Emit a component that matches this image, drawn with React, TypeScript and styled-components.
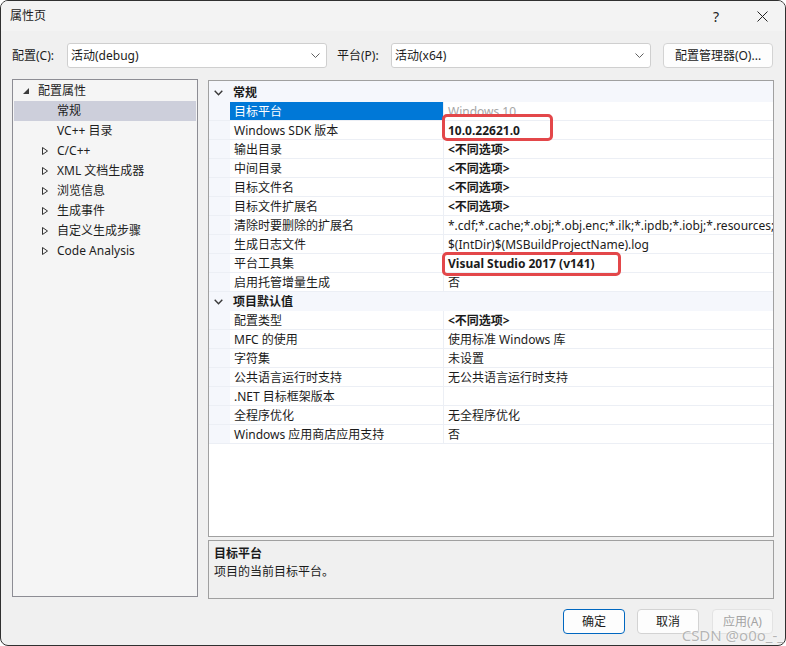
import React from 'react';
import styled, { createGlobalStyle, css } from 'styled-components';

const GlobalStyle = createGlobalStyle`
  html, body {
    margin: 0;
    padding: 0;
    background: #ffffff;
  }
  body {
    font-family: "Noto Sans", "Noto Sans CJK SC", sans-serif;
    font-size: 12px;
    color: #1b1b1b;
  }
  * {
    box-sizing: border-box;
  }
`;

const Window = styled.div`
  position: relative;
  width: 786px;
  height: 646px;
  border: 1px solid #303030;
  border-radius: 8px;
  overflow: hidden;
  background: #f0f0f0;
  display: flex;
  flex-direction: column;
`;

const TitleBar = styled.div`
  height: 30px;
  display: flex;
  align-items: center;
  padding-left: 9px;
  background: #f3f3f3;
`;

const Title = styled.span`
  flex: 1;
  font-size: 12px;
  line-height: 16px;
`;

const TitleButton = styled.div`
  width: 46px;
  height: 30px;
  display: flex;
  align-items: center;
  justify-content: center;
  font-size: 14px;
  color: #222;
`;

const Body = styled.div`
  flex: 1;
  display: flex;
  flex-direction: column;
  padding: 12px 11px 11px 11px;
`;

const TopRow = styled.div`
  height: 25px;
  display: flex;
  align-items: center;
`;

const FieldLabel = styled.span<{ $width: number; $gap?: number }>`
  flex-shrink: 0;
  width: ${({ $width }) => $width}px;
  margin-left: ${({ $gap = 0 }) => $gap}px;
  line-height: 16px;
  white-space: nowrap;
`;

const Combo = styled.div`
  flex-shrink: 0;
  width: 260px;
  height: 25px;
  display: flex;
  align-items: center;
  justify-content: space-between;
  padding: 0 6px 0 3px;
  background: #ffffff;
  border: 1px solid #cfcfcf;
  border-radius: 3px;
  line-height: 16px;
`;

const Button = styled.div<{ $width: number; $primary?: boolean; $disabled?: boolean; $gap?: number }>`
  flex-shrink: 0;
  width: ${({ $width }) => $width}px;
  height: 25px;
  margin-left: ${({ $gap = 0 }) => $gap}px;
  display: flex;
  align-items: center;
  justify-content: center;
  background: #fdfdfd;
  border: 1px solid #d3d3d3;
  border-radius: 4px;
  color: #1b1b1b;
  line-height: 16px;
  white-space: nowrap;
  ${({ $primary }) =>
    $primary &&
    css`
      border-color: #0067c0;
    `}
  ${({ $disabled }) =>
    $disabled &&
    css`
      color: #a3a3a3;
      border-color: #e3e3e3;
      background: #f7f7f7;
    `}
`;

const Main = styled.div`
  height: 520px;
  margin-top: 11px;
  display: flex;
  gap: 10px;
`;

const Tree = styled.div`
  flex-shrink: 0;
  width: 186px;
  height: 518px;
  padding-top: 1px;
  background: #f5f5f5;
  border: 1px solid #8d8d94;
`;

const TreeRow = styled.div<{ $level: number; $selected?: boolean }>`
  height: 20px;
  margin: 0 1px;
  display: flex;
  align-items: center;
  padding-left: ${({ $level }) => ($level === 0 ? 9 : 28)}px;
  background: ${({ $selected }) => ($selected ? '#cdcfdb' : 'transparent')};
  line-height: 16px;
  color: #1e1e1e;
  white-space: nowrap;
`;

const Expander = styled.span`
  width: 15px;
  height: 20px;
  display: flex;
  align-items: center;
`;

const RightColumn = styled.div`
  flex: 1;
  min-width: 0;
  margin-top: 1px;
  display: flex;
  flex-direction: column;
  gap: 3px;
`;

const Grid = styled.div`
  height: 457px;
  background: #ffffff;
  border: 1px solid #a0a0a0;
  overflow: hidden;
`;

const CategoryRow = styled.div<{ $first?: boolean }>`
  height: ${({ $first }) => ($first ? 21 : 19)}px;
  padding-top: ${({ $first }) => ($first ? 3 : 1)}px;
  display: flex;
  align-items: center;
  background: #f5f7fc;
  font-weight: 700;
  line-height: 16px;
`;

const CategoryToggle = styled.span`
  width: 24px;
  height: 16px;
  display: flex;
  align-items: center;
  padding-left: 5px;
`;

const PropRow = styled.div`
  height: 19px;
  display: flex;
  border-bottom: 1px solid #eceff5;
`;

const Gutter = styled.div`
  flex-shrink: 0;
  width: 21px;
  background: #f5f7fc;
`;

const NameCell = styled.div<{ $selected?: boolean }>`
  flex-shrink: 0;
  width: 214px;
  padding: 1px 0 0 4px;
  border-right: 1px solid #eceff5;
  line-height: 17px;
  white-space: nowrap;
  overflow: hidden;
  background: ${({ $selected }) => ($selected ? '#0078d7' : 'transparent')};
  color: ${({ $selected }) => ($selected ? '#ffffff' : '#1b1b1b')};
`;

const ValueCell = styled.div<{ $bold?: boolean; $muted?: boolean }>`
  position: relative;
  flex: 1;
  min-width: 0;
  padding: 1px 0 0 4px;
  line-height: 17px;
  white-space: nowrap;
  font-weight: ${({ $bold }) => ($bold ? 700 : 400)};
  color: ${({ $muted }) => ($muted ? '#a6a6a6' : '#1b1b1b')};
`;

const Highlight = styled.span<{ $top: number; $width: number; $height: number }>`
  position: absolute;
  z-index: 1;
  left: -2px;
  top: ${({ $top }) => $top}px;
  width: ${({ $width }) => $width}px;
  height: ${({ $height }) => $height}px;
  border: 3px solid #e3474a;
  border-radius: 5px;
  pointer-events: none;
`;

const Description = styled.div`
  flex: 1;
  padding: 4px 5px 2px;
  background: #f0f0f0;
  border: 1px solid #a0a0a0;
  line-height: 18px;
`;

const DescTitle = styled.div`
  font-weight: 700;
`;

const ButtonRow = styled.div`
  height: 25px;
  margin-top: 10px;
  display: flex;
  justify-content: flex-end;
  padding-right: 1px;
`;

const Watermark = styled.span`
  position: absolute;
  right: 1px;
  bottom: 1px;
  font-family: "Noto Sans", sans-serif;
  font-size: 15px;
  line-height: 18px;
  color: rgba(150, 150, 150, 0.7);
  text-shadow: 0 0 2px #ffffff;
  pointer-events: none;
`;

const Chevron = () => (
  <svg width="9" height="5" viewBox="0 0 9 5">
    <polyline points="0.5,0.5 4.5,4.5 8.5,0.5" fill="none" stroke="#606060" strokeWidth="1" />
  </svg>
);

const CategoryChevron = () => (
  <svg width="9" height="6" viewBox="0 0 9 6">
    <polyline points="0.7,0.7 4.5,4.8 8.3,0.7" fill="none" stroke="#3a3a3a" strokeWidth="1.4" />
  </svg>
);

const OpenArrow = () => (
  <svg width="6" height="6" viewBox="0 0 6 6">
    <polygon points="6,0 6,6 0,6" fill="#3c3c3c" />
  </svg>
);

const ClosedArrow = () => (
  <svg width="6" height="8" viewBox="0 0 6 8">
    <polygon points="0.5,0.5 5.5,4 0.5,7.5" fill="none" stroke="#333" strokeWidth="1" />
  </svg>
);

const CloseIcon = () => (
  <svg width="11" height="11" viewBox="0 0 11 11">
    <path d="M0.5 0.5 L10.5 10.5 M10.5 0.5 L0.5 10.5" stroke="#222" strokeWidth="1" />
  </svg>
);

interface TreeItem {
  label: string;
  level: number;
  expander?: 'open' | 'closed';
  selected?: boolean;
}

const treeItems: TreeItem[] = [
  { label: '配置属性', level: 0, expander: 'open' },
  { label: '常规', level: 1, selected: true },
  { label: 'VC++ 目录', level: 1 },
  { label: 'C/C++', level: 1, expander: 'closed' },
  { label: 'XML 文档生成器', level: 1, expander: 'closed' },
  { label: '浏览信息', level: 1, expander: 'closed' },
  { label: '生成事件', level: 1, expander: 'closed' },
  { label: '自定义生成步骤', level: 1, expander: 'closed' },
  { label: 'Code Analysis', level: 1, expander: 'closed' },
];

interface Prop {
  name: string;
  value: string;
  bold?: boolean;
  muted?: boolean;
  selected?: boolean;
  mark?: { top: number; width: number; height: number };
}

const categories: { title: string; props: Prop[] }[] = [
  {
    title: '常规',
    props: [
      { name: '目标平台', value: 'Windows 10', muted: true, selected: true },
      { name: 'Windows SDK 版本', value: '10.0.22621.0', bold: true, mark: { top: -7, width: 111, height: 27 } },
      { name: '输出目录', value: '<不同选项>', bold: true },
      { name: '中间目录', value: '<不同选项>', bold: true },
      { name: '目标文件名', value: '<不同选项>', bold: true },
      { name: '目标文件扩展名', value: '<不同选项>', bold: true },
      { name: '清除时要删除的扩展名', value: '*.cdf;*.cache;*.obj;*.obj.enc;*.ilk;*.ipdb;*.iobj;*.resources;*.tlb;*.tli;*.tlh' },
      { name: '生成日志文件', value: '$(IntDir)$(MSBuildProjectName).log' },
      { name: '平台工具集', value: 'Visual Studio 2017 (v141)', bold: true, mark: { top: -2, width: 179, height: 24 } },
      { name: '启用托管增量生成', value: '否' },
    ],
  },
  {
    title: '项目默认值',
    props: [
      { name: '配置类型', value: '<不同选项>', bold: true },
      { name: 'MFC 的使用', value: '使用标准 Windows 库' },
      { name: '字符集', value: '未设置' },
      { name: '公共语言运行时支持', value: '无公共语言运行时支持' },
      { name: '.NET 目标框架版本', value: '' },
      { name: '全程序优化', value: '无全程序优化' },
      { name: 'Windows 应用商店应用支持', value: '否' },
    ],
  },
];

const App: React.FC = () => {
  return (
    <>
      <GlobalStyle />
      <Window>
        <TitleBar>
          <Title>属性页</Title>
          <TitleButton>?</TitleButton>
          <TitleButton>
            <CloseIcon />
          </TitleButton>
        </TitleBar>

        <Body>
          <TopRow>
            <FieldLabel $width={55}>配置(C):</FieldLabel>
            <Combo>
              <span>活动(debug)</span>
              <Chevron />
            </Combo>
            <FieldLabel $width={54} $gap={10}>平台(P):</FieldLabel>
            <Combo>
              <span>活动(x64)</span>
              <Chevron />
            </Combo>
            <Button $width={110} $gap={12}>配置管理器(O)...</Button>
          </TopRow>

          <Main>
            <Tree>
              {treeItems.map((item) => (
                <TreeRow key={item.label} $level={item.level} $selected={item.selected}>
                  <Expander>
                    {item.expander === 'open' && <OpenArrow />}
                    {item.expander === 'closed' && <ClosedArrow />}
                  </Expander>
                  {item.label}
                </TreeRow>
              ))}
            </Tree>

            <RightColumn>
              <Grid>
                {categories.map((cat, i) => (
                  <React.Fragment key={cat.title}>
                    <CategoryRow $first={i === 0}>
                      <CategoryToggle>
                        <CategoryChevron />
                      </CategoryToggle>
                      {cat.title}
                    </CategoryRow>
                    {cat.props.map((p) => (
                      <PropRow key={p.name}>
                        <Gutter />
                        <NameCell $selected={p.selected}>{p.name}</NameCell>
                        <ValueCell $bold={p.bold} $muted={p.muted}>
                          {p.value}
                          {p.mark && (
                            <Highlight $top={p.mark.top} $width={p.mark.width} $height={p.mark.height} />
                          )}
                        </ValueCell>
                      </PropRow>
                    ))}
                  </React.Fragment>
                ))}
              </Grid>
              <Description>
                <DescTitle>目标平台</DescTitle>
                <div>项目的当前目标平台。</div>
              </Description>
            </RightColumn>
          </Main>

          <ButtonRow>
            <Button $width={62} $primary>确定</Button>
            <Button $width={62} $gap={12}>取消</Button>
            <Button $width={61} $gap={13} $disabled>应用(A)</Button>
          </ButtonRow>
        </Body>

        <Watermark>CSDN @o0o_-_</Watermark>
      </Window>
    </>
  );
};

export default App;
